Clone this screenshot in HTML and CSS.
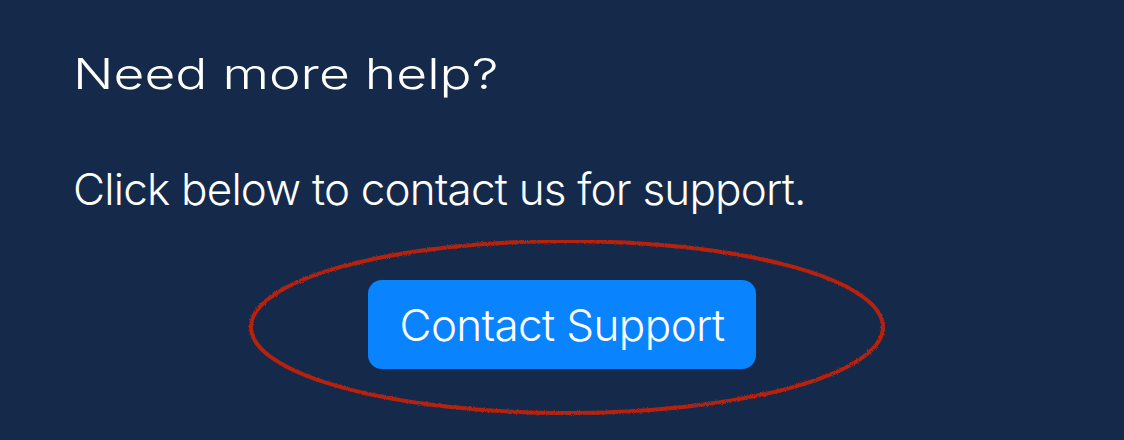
FILE: index.html
```html
<!DOCTYPE html>
<html>
<head>
<meta charset="utf-8">
<link rel="stylesheet" href="styles.css">
</head>
<body>
<main class="panel">
  <h2 class="title">Need more help?</h2>
  <p class="lead">Click below to contact us for support.</p>
  <div class="action">
    <button class="btn">Contact Support</button>
    <svg class="circle" width="660" height="200" viewBox="0 0 660 200" aria-hidden="true">
      <filter id="rough"><feTurbulence type="fractalNoise" baseFrequency="1.1" numOctaves="2" result="n"/><feDisplacementMap in="SourceGraphic" in2="n" scale="3"/></filter>
      <ellipse cx="325" cy="87" rx="316" ry="86" fill="none" stroke="#b8200e" stroke-width="4" filter="url(#rough)"/>
    </svg>
  </div>
</main>
</body>
</html>
```
FILE: styles.css
```css
html, body {
  margin: 0;
  padding: 0;
  background: #152a4b;
}
.panel {
  width: 1124px;
  height: 440px;
  box-sizing: border-box;
  padding: 49px 0 0 73px;
  color: #ffffff;
  overflow: hidden;
}
.title {
  display: inline-block;
  margin: 0;
  font-family: Inter, "DejaVu Sans", sans-serif;
  font-weight: 300;
  font-size: 42px;
  line-height: 50px;
  letter-spacing: 0;
  transform: scaleX(1.27);
  transform-origin: left center;
}
.lead {
  margin: 65px 0 0 0;
  font-family: Inter, "Liberation Sans", sans-serif;
  font-weight: 300;
  font-size: 44px;
  line-height: 50px;
  letter-spacing: -0.8px;
}
.action {
  position: relative;
  display: flex;
  justify-content: flex-start;
  margin: 66px 0 0 295px;
}
.btn {
  width: 388px;
  height: 89px;
  border: none;
  border-radius: 14px;
  background: #0a84fe;
  color: #ffffff;
  font-family: Inter, "Liberation Sans", sans-serif;
  font-weight: 300;
  font-size: 44px;
  letter-spacing: -0.6px;
  padding: 0;
}
.circle {
  position: absolute;
  left: -126px;
  top: -40px;
  pointer-events: none;
}
```
